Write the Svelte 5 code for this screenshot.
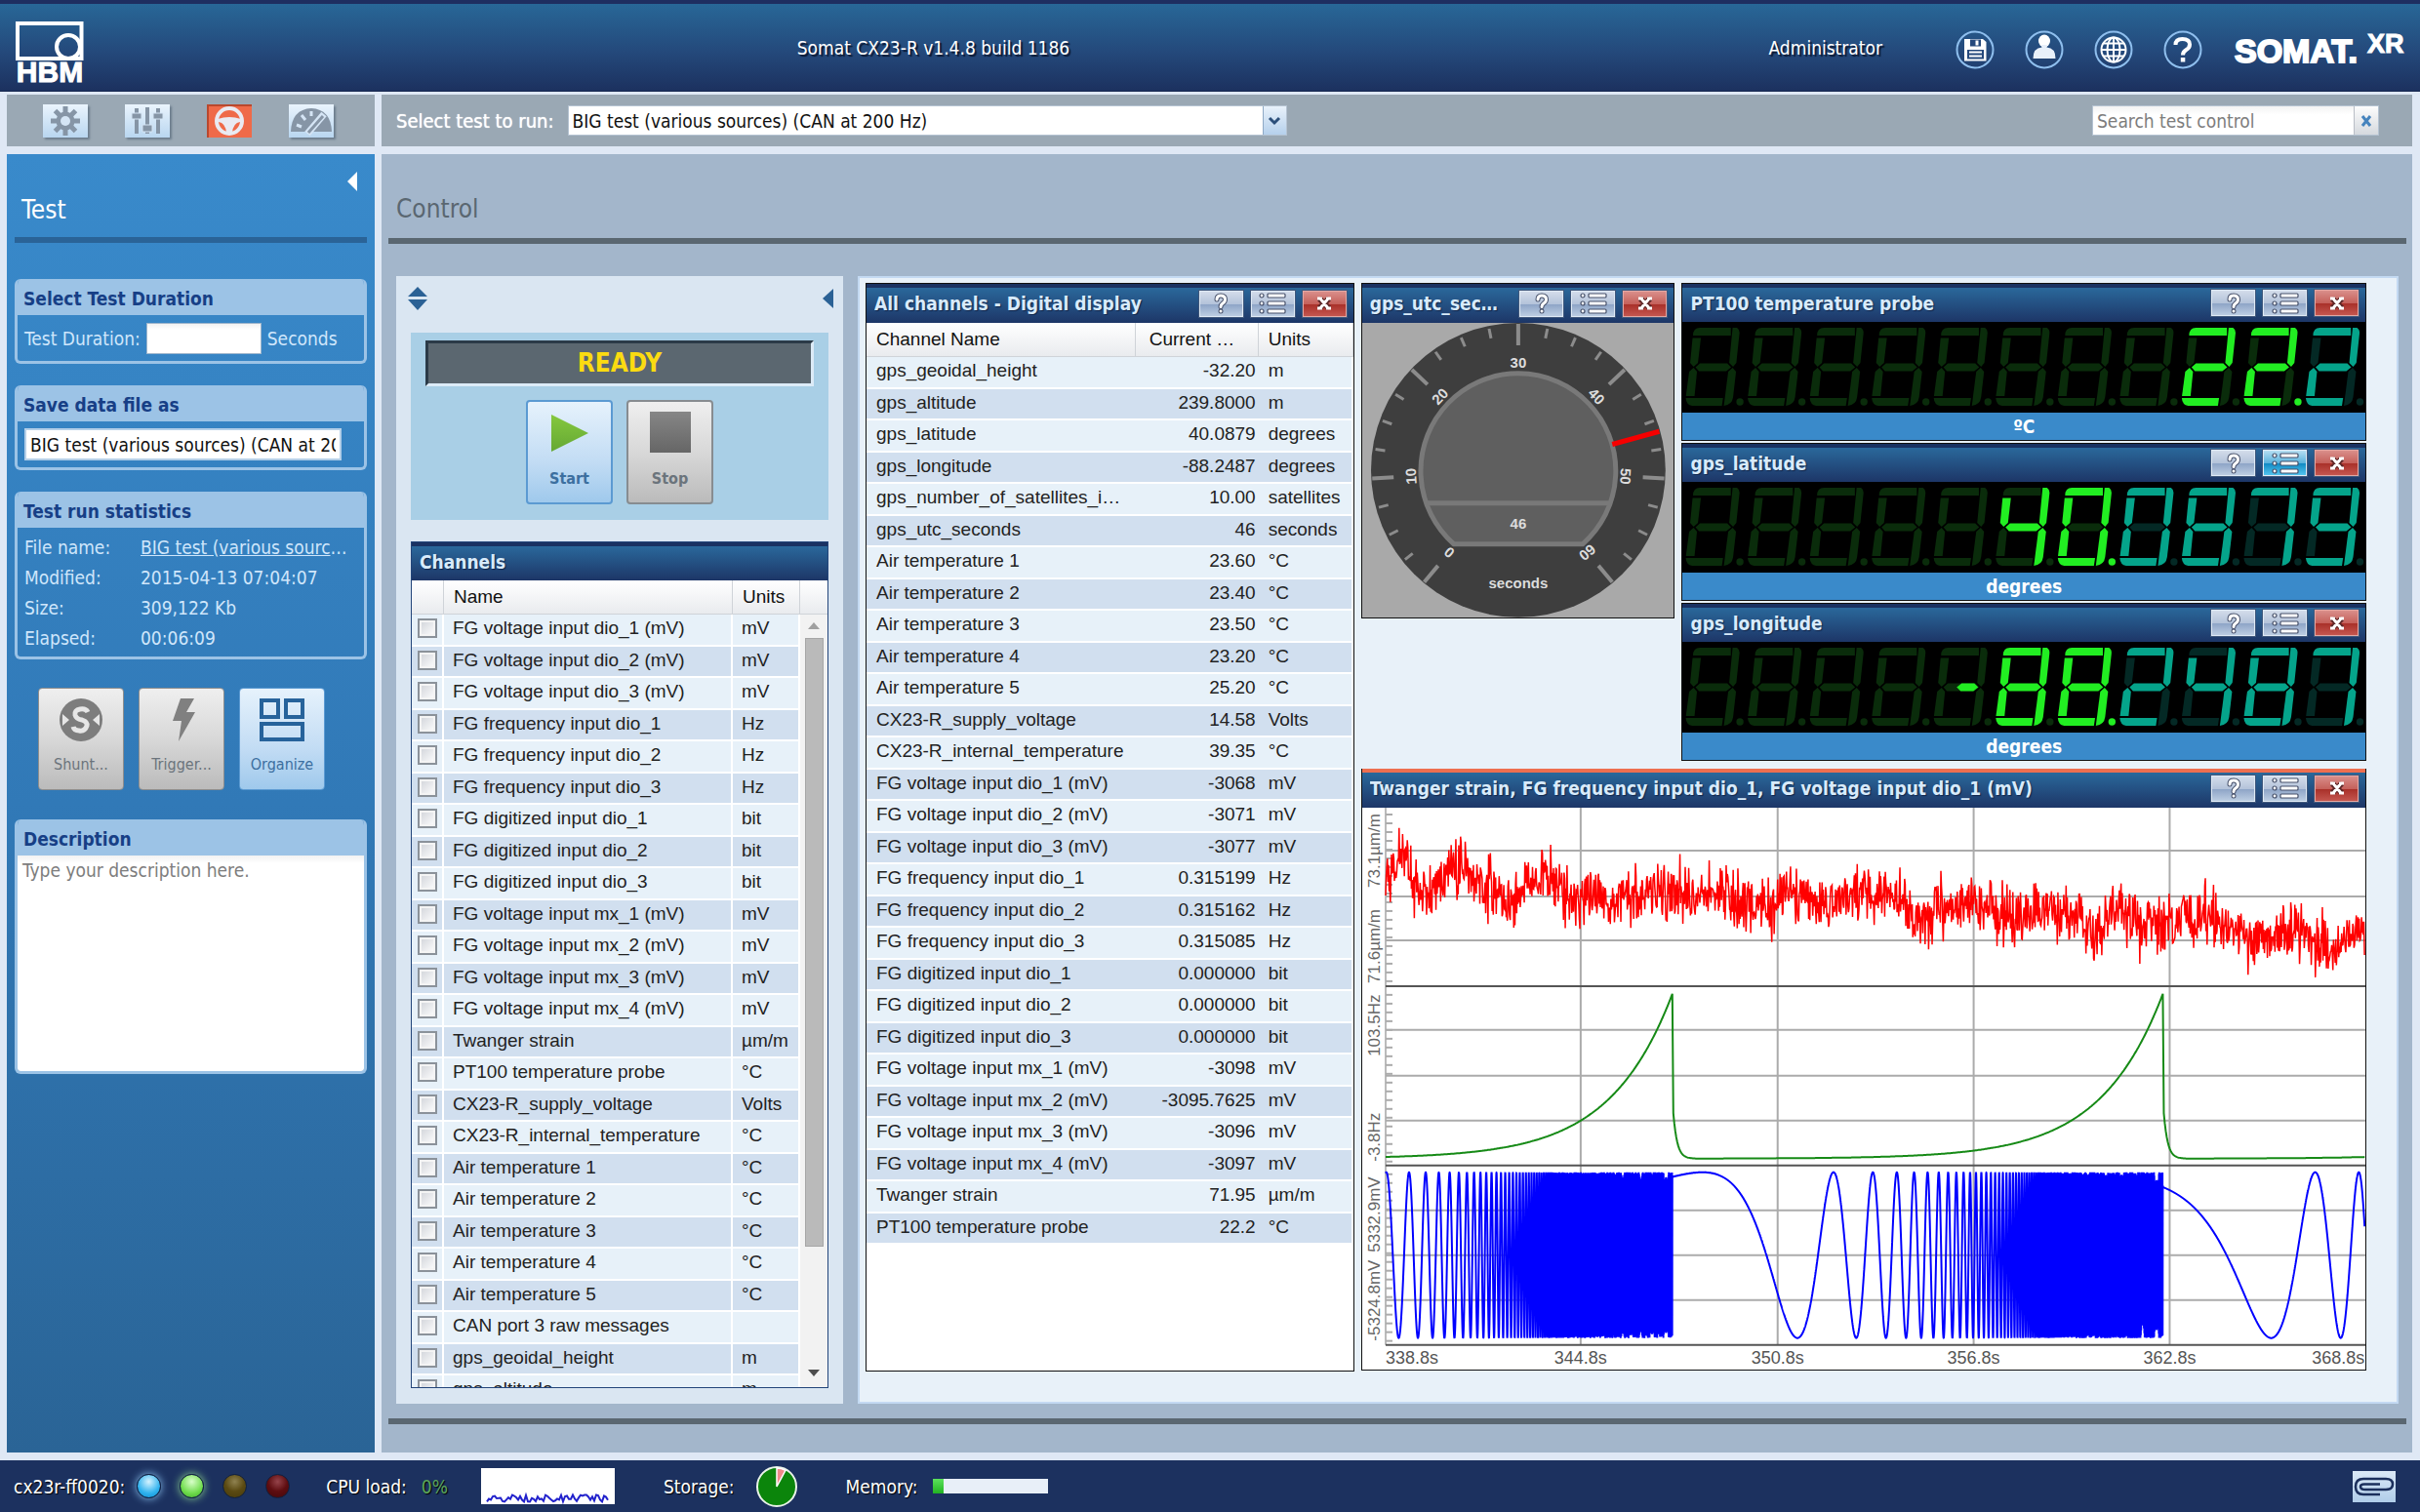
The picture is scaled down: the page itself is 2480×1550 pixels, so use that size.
<script>
  const channels = [
    ['FG voltage input dio_1 (mV)', 'mV'],
    ['FG voltage input dio_2 (mV)', 'mV'],
    ['FG voltage input dio_3 (mV)', 'mV'],
    ['FG frequency input dio_1', 'Hz'],
    ['FG frequency input dio_2', 'Hz'],
    ['FG frequency input dio_3', 'Hz'],
    ['FG digitized input dio_1', 'bit'],
    ['FG digitized input dio_2', 'bit'],
    ['FG digitized input dio_3', 'bit'],
    ['FG voltage input mx_1 (mV)', 'mV'],
    ['FG voltage input mx_2 (mV)', 'mV'],
    ['FG voltage input mx_3 (mV)', 'mV'],
    ['FG voltage input mx_4 (mV)', 'mV'],
    ['Twanger strain', 'µm/m'],
    ['PT100 temperature probe', '°C'],
    ['CX23-R_supply_voltage', 'Volts'],
    ['CX23-R_internal_temperature', '°C'],
    ['Air temperature 1', '°C'],
    ['Air temperature 2', '°C'],
    ['Air temperature 3', '°C'],
    ['Air temperature 4', '°C'],
    ['Air temperature 5', '°C'],
    ['CAN port 3 raw messages', ''],
    ['gps_geoidal_height', 'm'],
    ['gps_altitude', 'm']
  ];

  const readings = [
    ['gps_geoidal_height', '-32.20', 'm'],
    ['gps_altitude', '239.8000', 'm'],
    ['gps_latitude', '40.0879', 'degrees'],
    ['gps_longitude', '-88.2487', 'degrees'],
    ['gps_number_of_satellites_in_view', '10.00', 'satellites'],
    ['gps_utc_seconds', '46', 'seconds'],
    ['Air temperature 1', '23.60', '°C'],
    ['Air temperature 2', '23.40', '°C'],
    ['Air temperature 3', '23.50', '°C'],
    ['Air temperature 4', '23.20', '°C'],
    ['Air temperature 5', '25.20', '°C'],
    ['CX23-R_supply_voltage', '14.58', 'Volts'],
    ['CX23-R_internal_temperature', '39.35', '°C'],
    ['FG voltage input dio_1 (mV)', '-3068', 'mV'],
    ['FG voltage input dio_2 (mV)', '-3071', 'mV'],
    ['FG voltage input dio_3 (mV)', '-3077', 'mV'],
    ['FG frequency input dio_1', '0.315199', 'Hz'],
    ['FG frequency input dio_2', '0.315162', 'Hz'],
    ['FG frequency input dio_3', '0.315085', 'Hz'],
    ['FG digitized input dio_1', '0.000000', 'bit'],
    ['FG digitized input dio_2', '0.000000', 'bit'],
    ['FG digitized input dio_3', '0.000000', 'bit'],
    ['FG voltage input mx_1 (mV)', '-3098', 'mV'],
    ['FG voltage input mx_2 (mV)', '-3095.7625', 'mV'],
    ['FG voltage input mx_3 (mV)', '-3096', 'mV'],
    ['FG voltage input mx_4 (mV)', '-3097', 'mV'],
    ['Twanger strain', '71.95', 'µm/m'],
    ['PT100 temperature probe', '22.2', '°C']
  ];

  const stats = [
    ['Modified:', '2015-04-13 07:04:07'],
    ['Size:', '309,122 Kb'],
    ['Elapsed:', '00:06:09']
  ];

  /* Seven-segment displays */
  const segments = {
    a: 'M8 8Q8 0 15 0H46.7V8Z',
    b: 'M48.5 0H53Q56 2 55.5 6L52.3 36L49 40L45 36Z',
    c: 'M48.5 41L52 45L49 71Q48 79 39.5 80L44 45Z',
    d: 'M0.5 72H38.7L37.5 80H7Q1 79 .5 72Z',
    e: 'M8.5 41L12 45L9.5 70H0.7L4 45Z',
    f: 'M7.5 10.5H16L13 36L8.5 40L5 36Z',
    g: 'M10.5 40.5L15 36.5H43L47 40.5L42 44.5H14Z'
  };
  const lit = {
    '0': 'abcdef', '2': 'abged', '4': 'fgbc', '7': 'abc', '8': 'abcdefg', '9': 'abcdfg', ' ': '', '-': ''
  };
  const displays = [
    { name: 'PT100 temperature probe', text: '        22.2', unit: 'ºC', active: false },
    { name: 'gps_latitude', text: '     40.0879', unit: 'degrees', active: true },
    { name: 'gps_longitude', text: '    -88.2487', unit: 'degrees', active: false }
  ].map((d) => {
    const point = d.text.indexOf('.') - 1;
    const cells = [...d.text.replace('.', '')].map((ch, i) => ({
      ch,
      x: 3 + i * 635 / 10,
      dot: i === point,
      tone: i > point ? 'teal' : 'green'
    }));
    return { ...d, cells };
  });

  /* Gauge */
  const gaugeAngle = (v) => -140 + (v / 60) * 280;
  const ticks = Array.from({ length: 25 }, (_, i) => ({ angle: gaugeAngle(i * 2.5), major: i % 4 === 0 }));
  const gaugeLabels = [0, 10, 20, 30, 40, 50, 60];

  /* Strip chart */
  let seed = 4711;
  function random() {
    seed = (seed * 1103515245 + 12345) % 2147483648;
    return seed / 2147483648;
  }
  const strainMean = [
    [24, 82], [36, 56], [45, 48], [56, 82], [70, 86], [87, 66], [100, 58], [114, 70], [130, 82], [147, 95], [164, 86],
    [178, 74], [195, 76], [218, 95], [242, 93], [266, 93], [289, 85], [316, 87], [337, 89], [364, 89], [391, 97],
    [418, 103], [431, 87], [452, 95], [479, 99], [502, 87], [526, 87], [553, 97], [570, 117], [587, 105], [621, 99],
    [648, 105], [682, 113], [715, 103], [749, 127], [769, 111], [796, 119], [817, 127], [844, 109], [871, 115],
    [898, 127], [932, 133], [952, 119], [976, 145], [999, 140], [1028, 125]
  ];
  function meanAt(x) {
    for (let i = 1; i < strainMean.length; i++) {
      const [x0, y0] = strainMean[i - 1];
      const [x1, y1] = strainMean[i];
      if (x <= x1) return y0 + ((y1 - y0) * (x - x0)) / (x1 - x0);
    }
    return 125;
  }
  let strain = '';
  for (let x = 24; x <= 1028; x += 0.6) {
    const spread = (random() + random() + random() - 1.5) * 30;
    const spike = random() > 0.985 ? (random() - 0.5) * 46 : 0;
    strain += `${x.toFixed(1)},${Math.min(174, meanAt(x) + spread + spike).toFixed(1)} `;
  }

  const sweepEnds = [318, 821, 1324];
  const growth = 0.0156;
  let frequency = '';
  for (let x = 24; x <= 1028; x += 1) {
    const end = sweepEnds.find((e) => x <= e);
    const rise = Math.exp(growth * (x - end)) * 169;
    const fall = x > 318 ? Math.exp(-(x - (end - 503)) / 4) * 60 : 0;
    frequency += `${x},${(360 - Math.max(rise, fall)).toFixed(1)} `;
  }

  const phaseShift = [-0.28, -0.14, 0.01];
  let voltage = '';
  for (let x = 24; x <= 1028; x += 0.08) {
    const i = sweepEnds.findIndex((e) => x <= e);
    const cycles = 2.72 * Math.exp(growth * (x - i * 503 - 36)) + phaseShift[i];
    voltage += `${x.toFixed(2)},${(459 - 85 * Math.cos(2 * Math.PI * cycles)).toFixed(1)} `;
  }
  const gridX = [224, 426, 627, 828];
  const gridY = [44, 91, 136, 228, 275, 321, 413, 459, 505];
  const rulers = [[2, 181], [187, 364], [371, 549]].flatMap(([from, to]) => {
    const marks = [];
    for (let y = from + 5; y < to; y += 9) marks.push(y);
    return marks;
  });
  const times = ['344.8s', '350.8s', '356.8s', '362.8s'];

  let load = '';
  for (let x = 6; x <= 131; x += 2) load += `${x},${(31 + (random() - 0.5) * 7).toFixed(1)} `;
</script>

{#snippet windowButtons(active)}
  <div class="win-buttons">
    <button class="win-btn" aria-label="Help">
      <svg viewBox="0 0 20 22" width="20" height="22">
        <g fill="none" stroke="#46506a" stroke-width="5" stroke-linecap="round"><path d="M6 7Q6 3 10 3Q14.500 3 14.500 7Q14.500 9.500 12 11Q10 12.500 10 14.500" /><path d="M10 19v.1" /></g>
        <g fill="none" stroke="#fff" stroke-width="3" stroke-linecap="round"><path d="M6 7Q6 3 10 3Q14.500 3 14.500 7Q14.500 9.500 12 11Q10 12.500 10 14.500" /><path d="M10 19v.1" /></g>
      </svg>
    </button>
    <button class="win-btn" class:active aria-label="Settings">
      <svg viewBox="0 0 28 22" width="28" height="22">
        {#each [3, 11, 19] as y}
          <rect x="1" y={y - 2} width="4" height="4" rx="2" fill="#fff" stroke="#46506a" stroke-width="1.200" />
          <rect x="9" y={y - 2} width="18" height="4" rx="1" fill="#fff" stroke="#46506a" stroke-width="1.200" />
        {/each}
      </svg>
    </button>
    <button class="win-btn close" aria-label="Close">
      <svg viewBox="0 0 18 16" width="18" height="16">
        <path d="M4 3L14 13M14 3L4 13" stroke="#5c2626" stroke-width="6" />
        <path d="M5 3L13 13M13 3L5 13M2 3h5M11 3h5M2 13h5M11 13h5" stroke="#fff" stroke-width="3" />
      </svg>
    </button>
  </div>
{/snippet}

<div class="app">
  <header class="top">
    <svg class="hbm" viewBox="0 0 70 68" width="70" height="68" role="img" aria-label="HBM">
      <path d="M2 2H67.500V38H2Z" fill="none" stroke="#fff" stroke-width="4" />
      <ellipse cx="54" cy="26" rx="12" ry="12" fill="none" stroke="#fff" stroke-width="4" />
      <text x="35" y="62" text-anchor="middle" class="hbm-text">HBM</text>
    </svg>
    <h1>Somat CX23-R v1.4.8 build 1186</h1>
    <span class="user">Administrator</span>
    <nav class="top-icons">
      <button aria-label="Save">
        <svg viewBox="0 0 40 40" width="40" height="40"><circle class="ring" cx="20" cy="20" r="18.500" />
          <path d="M9 9H28L31.500 12V31.500H9Z" fill="#fff" /><path d="M15 9.500H26V16.500H15Z" fill="#24487c" /><path d="M20.500 10.500h3v5h-3z" fill="#fff" /><path d="M12 20H29V29.500H12Z" fill="#24487c" /><path d="M14 22.500H27M14 26.500H27" stroke="#fff" stroke-width="2" /></svg>
      </button>
      <button aria-label="User">
        <svg viewBox="0 0 40 40" width="40" height="40"><circle class="ring" cx="20" cy="20" r="18.500" />
          <ellipse cx="20" cy="11" rx="6" ry="6.500" fill="#fff" /><path d="M8.500 29Q8.500 18 17.500 17.500L17 15H23L22.500 17.500Q31.500 18 31.500 29Z" fill="#e8f0fa" /></svg>
      </button>
      <button aria-label="Language">
        <svg viewBox="0 0 40 40" width="40" height="40"><circle class="ring" cx="20" cy="20" r="18.500" />
          <g fill="none" stroke="#fff" stroke-width="2"><circle cx="20" cy="20" r="12.500" /><ellipse cx="20" cy="20" rx="6.500" ry="12.500" /><path d="M20 7.500v25M7.500 20h25M9.500 13.500h21M9.500 26.500h21" /></g></svg>
      </button>
      <button aria-label="Help">
        <svg viewBox="0 0 40 40" width="40" height="40"><circle class="ring" cx="20" cy="20" r="18.500" />
          <path d="M12.500 15Q12.500 9 19.500 9Q27 9 27 14.500Q27 18 23.500 20Q20 22 20 25.500" fill="none" stroke="#fff" stroke-width="4" /><path d="M17.800 28h4.500v4.500h-4.500z" fill="#fff" /></svg>
      </button>
    </nav>
    <svg class="somat" viewBox="0 0 178 48" width="178" height="48" role="img" aria-label="SOMAT XR">
      <text x="2" y="38" class="somat-text">SOMAT.</text>
      <text x="138" y="28" class="xr-text">XR</text>
    </svg>
  </header>

  <div class="body">
    <nav class="bar modes">
      <button aria-label="Settings"><svg viewBox="0 0 46 34" width="46" height="34">
        <g stroke="#8695a6" stroke-width="5"><path d="M23 2v30M8 17h30M12.500 6.500l21 21M33.500 6.500l-21 21" /></g><circle cx="23" cy="17" r="9.500" fill="#8695a6" /><circle cx="23" cy="17" r="5" fill="#d5e5f5" /></svg></button>
      <button aria-label="Channels"><svg viewBox="0 0 46 34" width="46" height="34">
        <g stroke="#8695a6" stroke-width="4"><path d="M12 4v26M23 3v27M34 4v26" /></g><path d="M7 9h10v6H7zM18 21h10v7H18zM29 9h10v6H29z" fill="#8695a6" stroke="#d5e5f5" /></svg></button>
      <button class="on" aria-label="Test" aria-current="page"><svg viewBox="0 0 46 34" width="46" height="34">
        <circle cx="23" cy="17" r="13" fill="none" stroke="#e9eaf2" stroke-width="4" /><path d="M11 15Q23 11 35 15L34 18Q27 19 26 29H20Q19 19 12 18Z" fill="#e9eaf2" /></svg></button>
      <button aria-label="Data"><svg viewBox="0 0 46 34" width="46" height="34">
        <path d="M2 28Q3 5 23 4Q43 5 44 28Z" fill="#8695a6" /><path d="M8 21l5 2M13 11l4 5M23 7v5" stroke="#d5e5f5" stroke-width="3" /><path d="M19 30L36 10" stroke="#d5e5f5" stroke-width="7" /><path d="M20 29L35 12" stroke="#8695a6" stroke-width="3" /></svg></button>
    </nav>

    <div class="bar tools">
      <label for="test-select">Select test to run:</label>
      <span class="select-wrap">
        <select id="test-select"><option>BIG test (various sources) (CAN at 200 Hz)</option></select>
        <span class="select-arrow"><svg viewBox="0 0 14 10" width="14" height="10"><path d="M2 2L7 7L12 2" fill="none" stroke="#2c4f7a" stroke-width="3" /></svg></span>
      </span>
      <span class="search">
        <input type="text" placeholder="Search test control" aria-label="Search test control" />
        <button aria-label="Clear search"><svg viewBox="0 0 12 12" width="12" height="12"><path d="M2 1L10 11M10 1L2 11" stroke="#4583bd" stroke-width="3" /></svg></button>
      </span>
    </div>

    <aside class="sidebar">
      <button class="fold" aria-label="Collapse sidebar"><svg viewBox="0 0 10 20" width="10" height="20"><path d="M10 0V20L0 10Z" fill="#fff" /></svg></button>
      <h2>Test</h2>
      <section class="box duration">
        <h3>Select Test Duration</h3>
        <div class="box-body row">
          <label for="duration">Test Duration:</label>
          <input id="duration" type="text" />
          <span>Seconds</span>
        </div>
      </section>
      <section class="box saveas">
        <h3><label for="file">Save data file as</label></h3>
        <div class="box-body">
          <input id="file" type="text" value="BIG test (various sources) (CAN at 200 Hz)" />
        </div>
      </section>
      <section class="box">
        <h3>Test run statistics</h3>
        <dl class="box-body stats">
          <dt>File name:</dt><dd><a href="#file">BIG test (various sources) (CAN at 200 Hz)</a></dd>
          {#each stats as [k, v]}
            <dt>{k}</dt><dd>{v}</dd>
          {/each}
        </dl>
      </section>
      <div class="actions">
        <button class="tile grey">
          <svg viewBox="0 0 46 46" width="46" height="46"><circle cx="23" cy="23" r="22" fill="#7d7d7d" /><path d="M4 17v12l7-6zM42 17v12l-7-6z" fill="#e6e6e6" /><path d="M30 15Q28 11 22 12Q16 13 17 18Q18 22 24 23Q30 25 29 29Q27 35 21 34Q16 34 15 30" fill="none" stroke="#e6e6e6" stroke-width="5" /></svg>
          Shunt...
        </button>
        <button class="tile grey">
          <svg viewBox="0 0 46 46" width="46" height="46"><path d="M22 1H36L28 15H37L20 45L23 24H14Z" fill="#808080" /></svg>
          Trigger...
        </button>
        <button class="tile blue">
          <svg viewBox="0 0 46 46" width="46" height="46"><g fill="none" stroke="#27639b" stroke-width="4"><path d="M2 3H19V20H2ZM27 3H44V20H27ZM2 27H44V43H2Z" /></g></svg>
          Organize
        </button>
      </div>
      <section class="box description">
        <h3><label for="description">Description</label></h3>
        <textarea id="description" placeholder="Type your description here."></textarea>
      </section>
    </aside>

    <main class="main">
      <h2>Control</h2>
      <div class="workspace">
        <section class="control">
          <div class="control-head">
            <button aria-label="Expand or collapse"><svg viewBox="0 0 20 24" width="20" height="24"><path d="M10 0L20 10H0ZM0 13H20L10 24Z" fill="#2a6195" /></svg></button>
            <button aria-label="Collapse panel"><svg viewBox="0 0 11 20" width="11" height="20"><path d="M11 0V20L0 10Z" fill="#2a6195" /></svg></button>
          </div>
          <div class="run">
            <output class="state">READY</output>
            <div class="run-buttons">
              <button class="tile blue big">
                <svg viewBox="0 0 42 44" width="42" height="44"><defs><linearGradient id="go" x2="0" y2="1"><stop offset="0" stop-color="#85c83e" /><stop offset="1" stop-color="#65a834" /></linearGradient></defs><path d="M2 3L40 22L2 41Z" fill="url(#go)" /></svg>
                Start
              </button>
              <button class="tile grey big">
                <svg viewBox="0 0 42 44" width="42" height="44"><defs><linearGradient id="halt" x2="0" y2="1"><stop offset="0" stop-color="#868686" /><stop offset="1" stop-color="#666" /></linearGradient></defs><rect width="42" height="42" fill="url(#halt)" /></svg>
                Stop
              </button>
            </div>
          </div>
          <div class="channels">
            <div class="win-head"><h3>Channels</h3></div>
            <div class="channel-list">
              <table>
                <colgroup><col class="c-check" /><col /><col class="c-unit" /></colgroup>
                <thead><tr><th aria-label="Selected"></th><th>Name</th><th>Units</th></tr></thead>
                <tbody>
                  {#each channels as [name, unit]}
                    <tr><td class="check"><input type="checkbox" aria-label={name} /></td><td>{name}</td><td>{unit}</td></tr>
                  {/each}
                </tbody>
              </table>
              <div class="scroll">
                <div class="scroll-head"></div>
                <svg viewBox="0 0 12 24" width="12" height="24"><path d="M0 15H12L6 8Z" fill="#a0a0a0" /></svg>
                <div class="thumb"></div>
                <div class="track"></div>
                <svg viewBox="0 0 12 24" width="12" height="24"><path d="M0 6H12L6 13Z" fill="#4d4d4d" /></svg>
              </div>
            </div>
          </div>
        </section>

        <section class="displays">
          <article class="win all">
            <div class="win-head"><h3>All channels - Digital display</h3>{@render windowButtons(false)}</div>
            <table>
              <colgroup><col /><col class="c-value" /><col class="c-units" /></colgroup>
              <thead><tr><th>Channel Name</th><th class="cur">Current Value</th><th>Units</th></tr></thead>
              <tbody>
                {#each readings as [name, value, unit]}
                  <tr><td>{name}</td><td class="num">{value}</td><td>{unit}</td></tr>
                {/each}
              </tbody>
            </table>
          </article>

          <div class="right">
            <div class="upper">
              <article class="win gauge">
                <div class="win-head"><h3>gps_utc_seconds</h3>{@render windowButtons(false)}</div>
                <svg viewBox="-160 -151 320 302">
                  <circle r="151" fill="#3e3e3e" />
                  {#each ticks as t}
                    <path d={t.major ? 'M0-150V-128' : 'M0-148V-138'} transform="rotate({t.angle})" stroke="#8c8c8c" stroke-width={t.major ? 4 : 3} />
                  {/each}
                  <path d="M-66 76A100 100 0 1 1 66 76Z" fill="#5f5f5f" stroke="#797979" stroke-width="5" stroke-linejoin="round" />
                  <path d="M-93 34H93" stroke="#797979" stroke-width="5" />
                  {#each gaugeLabels as v}
                    <text transform="rotate({gaugeAngle(v)})" y="-105">{v}</text>
                  {/each}
                  <text y="60">46</text>
                  <text y="121">seconds</text>
                  <path d="M0-100V-150" transform="rotate({gaugeAngle(46)})" stroke="#f60000" stroke-width="5" />
                </svg>
              </article>

              <div class="leds">
                {#each displays as d}
                  <article class="win led">
                    <div class="win-head"><h3>{d.name}</h3>{@render windowButtons(d.active)}</div>
                    <svg viewBox="0 0 699 93" role="img" aria-label={d.text.trim()}>
                      {#each d.cells as cell}
                        <g class={cell.tone} transform="translate({cell.x} 6)">
                          {#each Object.entries(segments) as [key, path]}
                            <path class:lit={lit[cell.ch].includes(key)} d={path} />
                          {/each}
                          <circle class:lit={cell.dot} cx="56" cy="76" r="3.700" />
                          {#if cell.ch === '-'}<path class="lit" d="M24 40.500L29 36.500H42L46 40.500L41 44.500H28Z" />{/if}
                        </g>
                      {/each}
                    </svg>
                    <div class="unit">{d.unit}</div>
                  </article>
                {/each}
              </div>
            </div>

            <article class="win chart">
              <div class="win-head"><h3>Twanger strain, FG frequency input dio_1, FG voltage input dio_1 (mV)</h3>{@render windowButtons(false)}</div>
              <svg viewBox="0 0 1029 576">
                <g stroke="#ababab" stroke-width="2">
                  <path d="M24 0V551" stroke="#bbb" />
                  {#each gridX as x}<path d="M{x} 0V551" />{/each}
                  {#each gridY as y}<path d="M24 {y}H1029" />{/each}
                  {#each rulers as y}<path d="M24 {y}h7" />{/each}
                </g>
                <path d="M24 183H1029M24 367H1029M24 551H1029" stroke="#555" stroke-width="2" />
                <polyline points={strain} stroke="#f00" stroke-width="1.500" fill="none" />
                <polyline points={frequency} stroke="#168a16" stroke-width="2" fill="none" />
                <polyline points={voltage} stroke="#00f" stroke-width="2" stroke-linejoin="bevel" fill="none" />
                <g class="axis-y">
                  <text transform="translate(18 82) rotate(-90)">73.1µm/m</text>
                  <text transform="translate(18 180) rotate(-90)">71.6µm/m</text>
                  <text transform="translate(18 255) rotate(-90)">103.5Hz</text>
                  <text transform="translate(18 363) rotate(-90)">-3.8Hz</text>
                  <text transform="translate(18 456) rotate(-90)">5332.9mV</text>
                  <text transform="translate(18 547) rotate(-90)">-5324.8mV</text>
                </g>
                <g class="axis-x">
                  <text x="24" y="570">338.8s</text>
                  {#each times as t, i}<text x={gridX[i]} y="570" text-anchor="middle">{t}</text>{/each}
                  <text x="1028" y="570" text-anchor="end">368.8s</text>
                </g>
              </svg>
            </article>
          </div>
        </section>
      </div>
    </main>
  </div>

  <footer class="status">
    <span class="host">cx23r-ff0020:</span>
    <span class="lamps">
      <i class="lamp cyan"></i><i class="lamp lime"></i><i class="lamp olive"></i><i class="lamp maroon"></i>
    </span>
    <span class="cpu">CPU load:</span>
    <span class="percent">0%</span>
    <svg class="load" viewBox="0 0 137 37" width="137" height="37"><polyline points={load} fill="none" stroke="#22c" stroke-width="2" /></svg>
    <span>Storage:</span>
    <svg class="pie" viewBox="0 0 42 42" width="42" height="42"><circle cx="21" cy="21" r="20" fill="#0b850b" stroke="#e9f2e9" stroke-width="2" /><path d="M21 21V2A19 19 0 0 1 30 4.300Z" fill="#f08a8a" stroke="#fff" stroke-width="1.500" /></svg>
    <label for="memory">Memory:</label>
    <progress id="memory" max="100" value="9"></progress>
    <button class="clip" aria-label="Attachments">
      <svg viewBox="0 0 44 32" width="44" height="32"><path d="M28 24H11Q3 24 3 16Q3 8 11 8H34Q41 8 41 13.500Q41 19 34 19H13Q8 19 8 16Q8 13.500 12 13.500H28" fill="none" stroke="#1b2f5c" stroke-width="2.500" /></svg>
    </button>
  </footer>
</div>

<style>
  :global(body) { margin: 0; background: #dfe8f5; }
  .app {
    --ui: 'DejaVu Sans Condensed', 'DejaVu Sans', sans-serif;
    --grid: 'Liberation Sans', Arial, sans-serif;
    display: flex; flex-direction: column; min-height: 100vh; box-sizing: border-box;
    font-family: var(--ui); font-size: 19px; line-height: 24px; color: #111;
  }
  .app :global(*) { box-sizing: border-box; }
  h1, h2, h3, dl, dd { margin: 0; font-size: 19px; font-weight: 400; }
  button { font: inherit; padding: 0; border: 0; background: none; cursor: pointer; }
  input, select, textarea { font: inherit; color: #111; border-radius: 0; }
  svg { display: block; flex: none; }

  .top {
    display: grid; grid-template-columns: 33% 1fr auto auto auto; align-items: center;
    height: 94px; padding: 0 14px 0 0; border-top: 4px solid #1e2e60; border-bottom: 1px solid #16264f;
    background: linear-gradient(#286797, #24497b 55%, #1c315f); color: #fff; flex: none;
    text-shadow: 2px 2px 1px #0c1830;
  }
  .top h1 { padding-left: 3px; }
  .hbm { margin: 15px 0 0 16px; overflow: visible; }
  .hbm-text { font: 700 30px var(--grid); fill: #fff; stroke: #fff; stroke-width: 1; text-shadow: none; }
  .user { margin-right: 75px; }
  .top-icons { display: flex; gap: 31px; margin: 5px 31px 0 0; }
  .ring { fill: none; stroke: #8fbfee; stroke-width: 2; }
  .somat { margin-top: 3px; overflow: visible; }
  .somat-text { font: 700 34px var(--grid); fill: #fff; stroke: #fff; stroke-width: 2; text-shadow: none; }
  .xr-text { font: 700 27px var(--grid); fill: #fff; stroke: #fff; stroke-width: 1; text-shadow: none; }

  .body {
    flex: 1; display: grid; grid-template-columns: 377px minmax(0, 1fr); grid-template-rows: 53px 1fr;
    gap: 8px 7px; padding: 3px 8px 8px 7px; background: #dfe8f5;
  }
  .bar { background: #9aa8b4; display: flex; align-items: center; }
  .modes { gap: 38px; padding-left: 37px; }
  .modes button { background: linear-gradient(#eaf4fd, #b9d6f0); box-shadow: 2px 2px 2px #6c7d8d; }
  .modes .on { background: #ef6a49; box-shadow: inset 2px 2px 0 #b9482e; }
  .tools { padding: 0 34px 0 15px; color: #fff; }
  .tools label { font-size: 20px; text-shadow: 0 0 1px #fff; }
  .select-wrap { display: flex; width: 737px; height: 31px; margin-left: 14px; border: 1px solid #b5c3d2; background: #fff; }
  select { flex: 1; border: 0; appearance: none; background: #fff; padding: 0 4px; }
  .select-arrow { width: 24px; display: grid; place-items: center; background: linear-gradient(#e9f2fb, #b5d0ec); border-left: 1px solid #8fa9c5; }
  .search { margin-left: auto; display: flex; height: 31px; width: 294px; border: 1px solid #b5c3d2; background: #fff; }
  .search input { flex: 1; min-width: 0; border: 0; padding: 0 4px; background: linear-gradient(#f3f3f3, #fff 30%); }
  .search button { width: 25px; display: grid; place-items: center; background: linear-gradient(#fdfdfd, #d5d9de); border-left: 1px solid #b9bec6; }
  ::placeholder { color: #7d7d7d; opacity: 1; }

  .sidebar {
    padding: 0 8px; background: linear-gradient(#398acb, #3179b7 50%, #2a6496);
    color: #cfe6fb; display: flex; flex-direction: column;
  }
  .fold { align-self: flex-end; margin: 18px 10px 0 0; }
  .sidebar h2, .main h2 { font-size: 26px; line-height: 32px; }
  .sidebar h2 { padding: 3px 7px 12px; color: #fff; border-bottom: 6px solid #2a6397; margin-bottom: 37px; }
  .box { border: 3px solid #9cc3e6; border-top: 0; border-radius: 6px; margin-bottom: 22px; overflow: hidden; }
  .box h3 { background: #9cc3e6; color: #173f86; font-weight: 700; height: 37px; line-height: 40px; padding-left: 6px; }
  .box-body { padding: 7px; }
  .row { display: flex; align-items: center; gap: 6px; height: 47px; }
  .row input { width: 118px; height: 32px; border: 1px solid #9fb6cc; background: linear-gradient(#f2f2f2, #fff 20%); }
  .saveas .box-body { height: 47px; }
  .saveas input { width: 325px; height: 33px; border: 2px solid #b4cfe8; padding: 0 4px; background: #fff; }
  .stats { display: grid; grid-template-columns: 119px 212px; row-gap: 7px; padding: 8px 7px 7px; }
  dd { overflow: hidden; text-overflow: ellipsis; white-space: nowrap; }
  dd a { color: inherit; }
  .actions { display: flex; gap: 15px; padding: 7px 0 0 24px; margin-bottom: 30px; }
  .tile {
    width: 88px; height: 105px; border: 1px solid; border-radius: 4px; display: flex; flex-direction: column;
    align-items: center; gap: 11px; padding-top: 9px; font-size: 16px;
  }
  .tile.grey { background: linear-gradient(#efefef, #d8d8d8 50%, #bbb); border-color: #8d8d8d; color: #6b747c; }
  .tile.blue { background: linear-gradient(#e6f2fc, #c2dcf4 60%, #9fc9ec); border-color: #5b9ad2; color: #3c6f9f; }
  .tile.big { width: 89px; height: 107px; padding-top: 10px; gap: 13px; font-weight: 700; border-width: 2px; }
  .tile.big.grey { border-color: #878c90; }
  .description { margin-bottom: 0; }
  textarea { display: block; width: 100%; height: 221px; border: 0; padding: 3px 5px; resize: none; background: linear-gradient(#f2f2f2, #fff 8px); }

  .main { background: #a3b6cb; padding: 40px 6px 29px 7px; display: flex; flex-direction: column; }
  .main h2 { padding: 0 8px 14px; color: #5a6771; border-bottom: 6px solid #5a6771; }
  .workspace {
    flex: 1; display: grid; grid-template-columns: 458px minmax(0, 1fr); gap: 15px;
    padding: 33px 8px 15px 8px; border-bottom: 6px solid #5a6771;
  }
  .control { background: #dae6f2; padding: 11px 15px 16px; display: flex; flex-direction: column; }
  .control-head { display: flex; justify-content: space-between; margin: 0 -5px 23px -3px; }
  .run { background: #a9cfe6; padding: 8px 15px 16px; display: flex; flex-direction: column; gap: 14px; margin-bottom: 22px; }
  .state {
    height: 47px; line-height: 40px; background: #5b6770; text-align: center; font-size: 26px; font-weight: 700; color: #fbdb11;
    border: 3px solid; border-color: #2b3a48 #dcebf7 #dcebf7 #2b3a48;
  }
  .run-buttons { display: flex; justify-content: center; gap: 14px; }
  .channels { flex: 1; display: flex; flex-direction: column; border: 1px solid #23457a; background: #fff; min-height: 0; }
  .win-head {
    display: flex; align-items: center; height: 39px; flex: none; padding: 0 7px 4px 8px; border-top: 4px solid #1a3262;
    background: linear-gradient(#2a689b, #1d3667); color: #d8ebfb; gap: 16px;
  }
  .win-head h3 { flex: 1; font-weight: 700; overflow: hidden; text-overflow: ellipsis; white-space: nowrap; text-shadow: 1px 1px 1px #10244a; }
  .channel-list { flex: 1 1 0; min-height: 400px; overflow: hidden; display: flex; }

  table { border-collapse: separate; border-spacing: 0; table-layout: fixed; width: 100%; font-family: var(--grid); font-size: 19px; line-height: 24px; color: #222; }
  th { height: 35px; padding: 0 0 0 10px; font-weight: 400; text-align: left; background: linear-gradient(#fff, #e9ebee); border: solid #cfd3d8; border-width: 0 1px 1px 0; color: #111; }
  td { height: 33px; padding: 0 0 4px 9px; border: solid #fff; border-width: 0 2px 2px 0; background: #e7f1f9; }
  tr:nth-child(even) td { height: 32px; padding-bottom: 3px; background: #d1dfef; }
  th, td { overflow: hidden; text-overflow: ellipsis; white-space: nowrap; }
  .c-check { width: 33px; }
  .c-unit { width: 69px; }
  .channel-list table { align-self: flex-start; flex: 1; }
  .check { padding-left: 6px; }
  .check input {
    appearance: none; display: block; width: 20px; height: 20px; margin: 0; border: 2px solid #8b929a;
    background: linear-gradient(135deg, #cfd2d8, #fff); box-shadow: inset 0 0 0 2px #f4f4f4;
  }
  .scroll { width: 28px; display: flex; flex-direction: column; align-items: center; background: #f2f2f2; }
  .scroll-head { width: 28px; height: 35px; flex: none; background: linear-gradient(#fff, #e9ebee); border-bottom: 1px solid #cfd3d8; }
  .thumb { width: 19px; flex: 83; background: #bababa; border: 1px solid #a6a6a6; }
  .track { flex: 16; }

  .displays {
    background: #e8f1f9; border: 2px solid #c3d9f2; padding: 5px 31px 31px 6px;
    display: grid; grid-template-columns: 501fr 1031fr; gap: 7px;
  }
  .win { border: 1px solid #111; background: #fff; min-width: 0; }
  .win .win-head { height: 40px; }
  .led .win-head { height: 39px; }
  .win-buttons { display: flex; gap: 8px; }
  .win-btn {
    width: 45px; height: 27px; display: grid; place-items: center; border: 1px solid #dfeaf5; outline: 1px solid #40587c;
    background: linear-gradient(#d3dcea, #b4c3da 50%, #8ca3c6 51%, #bccde2);
  }
  .win-btn.active { background: linear-gradient(#b5def2, #5bb3dd 50%, #0e87c2 51%, #52c4ee); }
  .win-btn.close { background: linear-gradient(#d98e8a, #c5615b 50%, #a82f28 51%, #c4564f); border-color: #e3a7a3; }
  .c-value { width: 126px; }
  .c-units { width: 97px; }
  .all td, .all th { padding-left: 10px; }
  .all th.cur { padding: 0 20px 0 14px; }
  .all td.num { text-align: right; padding-right: 3px; padding-left: 0; border-right-width: 0; }
  .all td:first-child { border-right-width: 0; padding-right: 10px; }

  .right { display: flex; flex-direction: column; gap: 8px; min-width: 0; }
  .upper { display: grid; grid-template-columns: 322fr 702fr; gap: 7px; align-items: start; }
  .gauge { background: #a9a9a9; }
  .gauge > svg, .led > svg, .chart > svg { width: 100%; }
  .gauge text { font: 700 15px var(--grid); fill: #dcdcdc; text-anchor: middle; }
  .leds { display: flex; flex-direction: column; gap: 2px; }
  .led > svg { background: #000; }
  .led > svg path, .led > svg circle { fill: #0a2c0b; }
  .led > svg .teal path, .led > svg .teal circle { fill: #042925; }
  .led > svg .green .lit { fill: #22ee22; }
  .led > svg .teal .lit { fill: #05a48b; }
  .unit { height: 28px; line-height: 28px; background: #3a8aca; color: #fff; font-weight: 700; text-align: center; }
  .chart .win-head { border-top-color: #ee6f50; }
  .chart { border-top: 0; }
  .axis-y { font: 17px var(--grid); fill: #666; }
  .axis-x { font: 18px var(--grid); fill: #555; }

  .status {
    flex: none; height: 53px; display: flex; align-items: center; padding: 0 25px 0 14px; background: #1c315f; color: #fff;
    text-shadow: 1px 1px 1px #000;
  }
  .lamps { display: flex; gap: 19px; margin: 0 37px 0 12px; }
  .lamp { width: 25px; height: 25px; border-radius: 50%; border: 1px solid #10203f; }
  .cyan { background: radial-gradient(circle at 50% 30%, #d6f3ff, #2fb2ee 60%, #0b8ad0); box-shadow: 0 0 9px #8fc8f5; }
  .lime { background: radial-gradient(circle at 50% 30%, #d8ffc9, #6fdc4c 60%, #3faa2b); box-shadow: 0 0 9px #8fd58f; }
  .olive { background: radial-gradient(circle at 50% 30%, #8f8250, #5b4a12 50%, #463a0c); }
  .maroon { background: radial-gradient(circle at 50% 30%, #95434a, #5e0d10 50%, #43080c); }
  .percent { margin-left: 15px; color: #5ba65a; }
  .load { background: #fff; margin: 0 50px 0 34px; }
  .pie { margin: 0 50px 0 22px; }
  progress { appearance: none; width: 118px; height: 15px; margin-left: 16px; border: 0; background: #e8eff8; }
  progress::-webkit-progress-bar { background: #e8eff8; }
  progress::-webkit-progress-value { background: linear-gradient(#5ce25c, #22b322); }
  .clip { margin-left: auto; background: linear-gradient(#dbe9f7, #b0cde9); }
</style>
